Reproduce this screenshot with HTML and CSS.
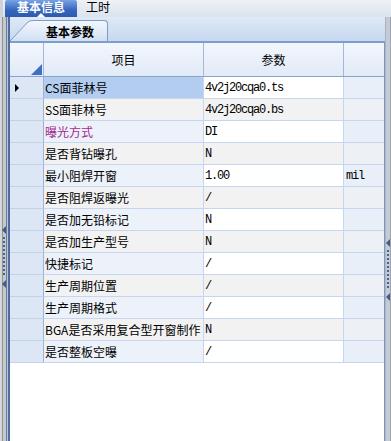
FILE: index.html
```html
<!DOCTYPE html>
<html lang="zh">
<head>
    <meta charset="UTF-8">
    <title>基本信息</title>
    <link rel="stylesheet" href="styles.css">
</head>
<body>
    <div class="topbar">
        <div class="tab active">
            <span class="tab-label">基本信息</span>
            <span class="tab-arrow"></span>
        </div>
        <div class="tab">
            <span class="tab-label">工时</span>
        </div>
    </div>

    <div class="workspace">
        <div class="splitter splitter-left">
            <span class="split-arrow"></span>
            <span class="split-dots"></span>
            <span class="split-arrow"></span>
        </div>

        <div class="panel">
            <div class="subtabs">
                <div class="subtab">
                    <svg class="subtab-slant" width="23" height="21" viewBox="0 0 23 21">
                        <defs>
                            <linearGradient id="tabfill" x1="0" y1="0" x2="0" y2="1">
                                <stop offset="0" stop-color="#f3f7fd"/>
                                <stop offset="1" stop-color="#d2e0f3"/>
                            </linearGradient>
                        </defs>
                        <path d="M0 21 L18 2 Q20 0.5 23 0.5 L23 21 Z" fill="url(#tabfill)"/>
                        <path d="M0 21 L18 2 Q20 0.5 23 0.5" fill="none" stroke="#7f9bc7" stroke-width="1"/>
                    </svg>
                    <div class="subtab-body">基本参数</div>
                </div>
            </div>

            <div class="grid">
                <div class="grid-row grid-head">
                    <div class="head-cell corner">
                        <svg width="11" height="11" viewBox="0 0 11 11"><path d="M11 0 L11 11 L0 11 Z" fill="#3f6fc2"/></svg>
                    </div>
                    <div class="head-cell">项目</div>
                    <div class="head-cell">参数</div>
                    <div class="head-cell"></div>
                </div>

                <div class="grid-body">
                    <div class="grid-row selected">
                        <div class="cell row-head"><span class="row-marker"></span></div>
                        <div class="cell item">CS面菲林号</div>
                        <div class="cell value">4v2j20cqa0.ts</div>
                        <div class="cell extra"></div>
                    </div>
                    <div class="grid-row">
                        <div class="cell row-head"></div>
                        <div class="cell item">SS面菲林号</div>
                        <div class="cell value">4v2j20cqa0.bs</div>
                        <div class="cell extra"></div>
                    </div>
                    <div class="grid-row">
                        <div class="cell row-head"></div>
                        <div class="cell item highlight">曝光方式</div>
                        <div class="cell value">DI</div>
                        <div class="cell extra"></div>
                    </div>
                    <div class="grid-row">
                        <div class="cell row-head"></div>
                        <div class="cell item">是否背钻曝孔</div>
                        <div class="cell value">N</div>
                        <div class="cell extra"></div>
                    </div>
                    <div class="grid-row">
                        <div class="cell row-head"></div>
                        <div class="cell item">最小阻焊开窗</div>
                        <div class="cell value">1.00</div>
                        <div class="cell extra">mil</div>
                    </div>
                    <div class="grid-row">
                        <div class="cell row-head"></div>
                        <div class="cell item">是否阻焊返曝光</div>
                        <div class="cell value">/</div>
                        <div class="cell extra"></div>
                    </div>
                    <div class="grid-row">
                        <div class="cell row-head"></div>
                        <div class="cell item">是否加无铅标记</div>
                        <div class="cell value">N</div>
                        <div class="cell extra"></div>
                    </div>
                    <div class="grid-row">
                        <div class="cell row-head"></div>
                        <div class="cell item">是否加生产型号</div>
                        <div class="cell value">N</div>
                        <div class="cell extra"></div>
                    </div>
                    <div class="grid-row">
                        <div class="cell row-head"></div>
                        <div class="cell item">快捷标记</div>
                        <div class="cell value">/</div>
                        <div class="cell extra"></div>
                    </div>
                    <div class="grid-row">
                        <div class="cell row-head"></div>
                        <div class="cell item">生产周期位置</div>
                        <div class="cell value">/</div>
                        <div class="cell extra"></div>
                    </div>
                    <div class="grid-row">
                        <div class="cell row-head"></div>
                        <div class="cell item">生产周期格式</div>
                        <div class="cell value">/</div>
                        <div class="cell extra"></div>
                    </div>
                    <div class="grid-row">
                        <div class="cell row-head"></div>
                        <div class="cell item">BGA是否采用复合型开窗制作</div>
                        <div class="cell value">N</div>
                        <div class="cell extra"></div>
                    </div>
                    <div class="grid-row">
                        <div class="cell row-head"></div>
                        <div class="cell item">是否整板空曝</div>
                        <div class="cell value">/</div>
                        <div class="cell extra"></div>
                    </div>
                </div>
            </div>
        </div>

        <div class="splitter splitter-right">
            <span class="split-arrow"></span>
            <span class="split-dots"></span>
            <span class="split-arrow"></span>
        </div>
    </div>
</body>
</html>
```

FILE: styles.css
```css
* {
    box-sizing: border-box;
}
body {
    margin: 0;
    width: 391px;
    height: 441px;
    overflow: hidden;
    display: flex;
    flex-direction: column;
    background: #fff;
    color: #000;
    font-family: "Noto Sans CJK SC", sans-serif;
    font-size: 12px;
}

/* top tab strip */
.topbar {
    height: 17px;
    display: flex;
    padding-left: 5px;
    background: linear-gradient(#eef1f6, #dce3ed);
    border-left: 3px solid #cfd2d8;
}
.tab {
    display: flex;
    flex-direction: column;
    align-items: center;
    padding: 1px 9px 0;
}
.tab-label {
    line-height: 12px;
}
.tab.active {
    width: 72px;
    margin-left: -3px;
    justify-content: space-between;
    background: linear-gradient(#78a4e4, #3565bb 60%, #2c5bb0);
    color: #fff;
    font-weight: bold;
    border-radius: 2px 2px 0 0;
}
.tab-arrow {
    width: 0;
    height: 0;
    border-left: 4px solid transparent;
    border-right: 4px solid transparent;
    border-bottom: 4px solid #fff;
}

/* main area */
.workspace {
    flex: 1;
    display: flex;
    min-height: 0;
}
.splitter {
    display: flex;
    flex-direction: column;
    align-items: center;
    gap: 3px;
}
.splitter-left {
    width: 8px;
    padding-top: 209px;
    background: linear-gradient(to right, #d6d7da 0 2px, #8d9096 2px 3px, #c4c8cf 3px 6px, #6f7d94 6px 7px, #b9c5d8 7px 8px);
}
.splitter-right {
    width: 6px;
    padding-top: 222px;
    background: linear-gradient(to right, #a9b3c4 0 1px, #c6cad2 1px 5px, #9ea5b1 5px 6px);
}
.split-arrow {
    width: 0;
    height: 0;
    border-top: 4px solid transparent;
    border-bottom: 4px solid transparent;
    border-right: 4px solid #465a84;
}
.split-dots {
    width: 2px;
    height: 40px;
    background: repeating-linear-gradient(#4c628c 0 2px, transparent 2px 4px);
}

.panel {
    flex: 1;
    display: flex;
    flex-direction: column;
    border-left: 2px solid #4d6c9f;
}

/* inner tabs */
.subtabs {
    height: 26px;
    padding-top: 3px;
    display: flex;
    background: linear-gradient(#dfe9f7, #c6d8f0);
    border-bottom: 2px solid #7f9dcc;
}
.subtab {
    display: flex;
    height: 21px;
}
.subtab-slant {
    display: block;
}
.subtab-body {
    width: 75px;
    display: flex;
    align-items: center;
    justify-content: center;
    border-top: 1px solid #7f9bc7;
    border-right: 1px solid #7f9bc7;
    border-radius: 0 4px 0 0;
    background: linear-gradient(#f3f7fd, #d2e0f3);
    font-weight: bold;
}

/* property grid */
.grid {
    flex: 1;
    display: flex;
    flex-direction: column;
    border-right: 1px solid #7e97bd;
    background: #fff;
}
.grid-row {
    display: grid;
    grid-template-columns: 34px 160px 140px 40px;
    height: 22px;
}
.grid-head {
    height: 34px;
    background: linear-gradient(#f3f7fd, #e1eaf7);
    border-bottom: 1px solid #8aa3c9;
}
.head-cell {
    display: flex;
    align-items: center;
    justify-content: center;
    border-right: 1px solid #a3b7d6;
}
.head-cell:last-child {
    border-right: none;
}
.head-cell.corner {
    align-items: flex-end;
    justify-content: flex-end;
    padding: 0 1px 1px 0;
}
.cell {
    display: flex;
    align-items: center;
    padding-left: 1px;
    white-space: nowrap;
    overflow: hidden;
    border-right: 1px solid #c6d6ee;
    border-bottom: 1px solid #c6d6ee;
}
.cell:last-child {
    border-right: none;
}
.row-head {
    background: #dce6f4;
    border-right-color: #9fb4d4;
    border-bottom-color: #c4d2e8;
}
.row-marker {
    margin-left: 4px;
    width: 0;
    height: 0;
    border-top: 4px solid transparent;
    border-bottom: 4px solid transparent;
    border-left: 4px solid #000;
}
.item {
    background: #edf2fa;
}
.value {
    background: #fff;
    font-family: "Liberation Mono", monospace;
    letter-spacing: -1.2px;
}
.extra {
    background: #e8eff9;
    padding-left: 2px;
    font-family: "Liberation Mono", monospace;
    letter-spacing: -1.2px;
}
.grid-body .grid-row:nth-child(even) .item,
.grid-body .grid-row:nth-child(even) .value {
    background: #f2f2f2;
}
.grid-body .grid-row:nth-child(even) .extra {
    background: #edf0f5;
}
.grid-row.selected .item {
    background: #b3cdf0;
}
.highlight {
    color: #a02a8e;
}
```
